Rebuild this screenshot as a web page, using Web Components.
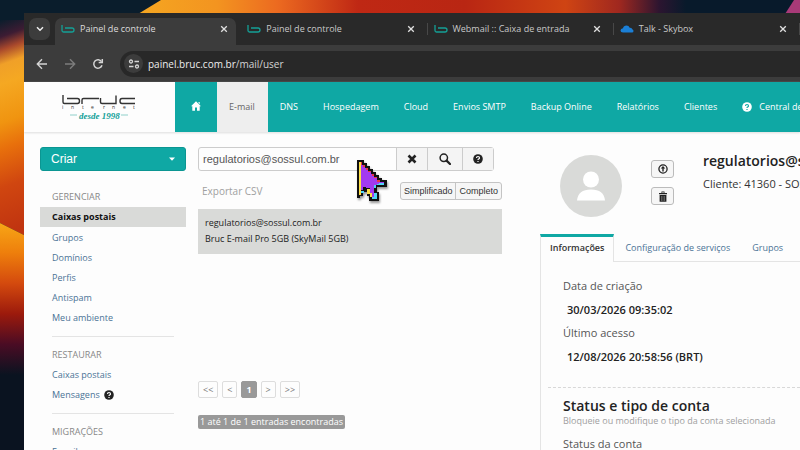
<!DOCTYPE html>
<html lang="pt-BR">
<head>
<meta charset="utf-8">
<title>Painel de controle</title>
<style>
html,body {
    margin:0;height:100%;
}
body {
    overflow:hidden;
    font:9px/14px "Open Sans","Noto Sans",sans-serif;
    color:#333;
    --theme:#0fa8a4;
    --link:#4a7396;
    --line:#e4e4e4;
    --muted:#a0a0a0;
}
</style>
</head>
<body>
<desk-top>
    <browser-window url="painel.bruc.com.br" path="/mail/user">
        <browser-tab slot="tabs" icon="bruc" active>Painel de controle</browser-tab>
        <browser-tab slot="tabs" icon="bruc">Painel de controle</browser-tab>
        <browser-tab slot="tabs" icon="bruc">Webmail :: Caixa de entrada</browser-tab>
        <browser-tab slot="tabs" icon="cloud">Talk - Skybox</browser-tab>
        <site-header></site-header>
        <mail-panel>
            <side-menu slot="menu"></side-menu>
            <mailbox-list slot="list"></mailbox-list>
            <account-detail slot="detail"></account-detail>
        </mail-panel>
    </browser-window>
    <mouse-pointer slot="pointer"></mouse-pointer>
</desk-top>
<script>
const icons = {
    bruc: '<svg width="14" height="10" viewBox="0 0 14 10" fill="none" stroke="#14a096" stroke-width="1.3"><path d="M1 1v5.500q0 1.500 1.500 1.500h8.500q2 0 2-2t-2-2H4"/></svg>',
    cloud: '<svg width="14" height="10" viewBox="0 0 14 10"><path fill="#1b7fd6" d="M3 8.500Q.500 8.500.500 6.500T3 4.300Q3.600 1.500 6.500 1.500q2.300 0 3.200 2.200Q12 3.500 12.300 5.300q1.200.4 1.200 1.700 0 1.500-1.500 1.500z"/></svg>',
    close: '<svg width="8" height="8" viewBox="0 0 8 8" stroke="currentColor" stroke-width="1.300"><path d="M1.200 1.200l5.600 5.600M6.800 1.200L1.200 6.800"/></svg>',
    chevron: '<svg width="8" height="6" viewBox="0 0 8 6" fill="none" stroke="currentColor" stroke-width="1.500"><path d="M1 1.200l3 3 3-3"/></svg>',
    back: '<svg width="12" height="12" viewBox="0 0 12 12" fill="none" stroke="currentColor" stroke-width="1.400"><path d="M11 6H1.500M6 1.300L1.300 6 6 10.700"/></svg>',
    forward: '<svg width="12" height="12" viewBox="0 0 12 12" fill="none" stroke="currentColor" stroke-width="1.400"><path d="M1 6h9.500M6 1.300L10.700 6 6 10.700"/></svg>',
    reload: '<svg width="12" height="12" viewBox="0 0 12 12" fill="none" stroke="currentColor" stroke-width="1.500"><path d="M10 7.200A4.200 4.200 0 1 1 9.500 3.600"/><path d="M10.300 1v3.600H6.700"/></svg>',
    tune: '<svg width="12" height="10" viewBox="0 0 12 10" fill="none" stroke="currentColor" stroke-width="1.300"><circle cx="3" cy="2.500" r="1.500"/><path d="M6.500 2.500h4.500M1 7.500h4.500"/><circle cx="9" cy="7.500" r="1.500"/></svg>',
    home: '<svg width="10" height="10" viewBox="0 0 10 10"><path fill="currentColor" d="M5 .300L10 5.200H8.700V9.700H6V6.500H4v3.200H1.300V5.200H0zM7.500 1h1.200v2.200L7.500 2z"/></svg>',
    help: '<svg width="10" height="10" viewBox="0 0 10 10"><circle cx="5" cy="5" r="4.800" fill="currentColor"/><path d="M3.500 4Q3.500 2.500 5 2.500T6.500 3.900Q6.500 4.600 5.600 5 5 5.300 5 6M5 6.900v1.100" fill="none" stroke="var(--hole,#fff)" stroke-width="1.200"/></svg>',
    remove: '<svg width="10" height="10" viewBox="0 0 10 10" stroke="currentColor" stroke-width="2.600"><path d="M1.500 1.500l7 7M8.500 1.500l-7 7"/></svg>',
    search: '<svg width="12" height="12" viewBox="0 0 12 12" fill="none" stroke="currentColor"><circle cx="4.800" cy="4.800" r="3.700" stroke-width="1.500"/><path d="M7.600 7.600l3.400 3.400" stroke-width="2.200" stroke-linecap="round"/></svg>',
    upload: '<svg width="10" height="10" viewBox="0 0 10 10"><circle cx="5" cy="5" r="4.100" fill="none" stroke="currentColor" stroke-width="1.300"/><path fill="currentColor" d="M5 2l2.300 2.600H5.700V7.600H4.300V4.600H2.700z"/></svg>',
    trash: '<svg width="10" height="11" viewBox="0 0 10 11"><path fill="currentColor" d="M1 2h2.500V.500h3V2H9v1.300H1zM4.300 1.200V2h1.400v-.8zM1.600 4h6.800v6.700H1.600z"/><path d="M3.500 5v5M5 5v5M6.500 5v5" stroke="#999" stroke-width=".5"/></svg>',
    caret: '<svg width="6" height="4" viewBox="0 0 6 4"><path fill="currentColor" d="M0 .500h6L3 3.700z"/></svg>'
};

const base = `
*,*::before {
    box-sizing:border-box;
}
svg {
    display:block;flex:none;
}
button,input {
    font:inherit;color:inherit;margin:0;padding:0;border:0;background:none;
}
a {
    color:inherit;text-decoration:none;
}
ul,h1,h2,h3,dl,dd,p {
    margin:0;padding:0;list-style:none;font-size:inherit;
}`;

class Part extends HTMLElement {
    constructor() {
        super();
        this.attachShadow({mode: 'open'});
    }
    connectedCallback() {
        this.shadowRoot.innerHTML = `<style>${base}${this.css()}</style>${this.html()}`;
    }
}

customElements.define('desk-top', class extends Part {
    css = () => `
    :host {
        display:block;position:relative;height:100%;overflow:hidden;
        padding:13px 0 0 24px;box-sizing:border-box;
        background:#0a1724;
    }
    .wall {
        position:absolute;inset:0;width:100%;height:100%;
    }`;
    html = () => `
    <svg class="wall" viewBox="0 0 800 450" preserveAspectRatio="none" aria-hidden="true">
        <defs>
            <linearGradient id="top" x1="130" x2="800" y1="0" y2="0" gradientUnits="userSpaceOnUse">
                <stop offset="0" stop-color="#f5a821"/><stop offset=".13" stop-color="#f39420"/>
                <stop offset=".22" stop-color="#ec6a20"/><stop offset=".34" stop-color="#bf2814"/>
                <stop offset=".5" stop-color="#b92613"/><stop offset=".65" stop-color="#cf4413"/>
                <stop offset=".73" stop-color="#a0281f"/><stop offset=".79" stop-color="#2c1530"/>
                <stop offset=".83" stop-color="#081a2b"/><stop offset="1" stop-color="#081a2b"/>
            </linearGradient>
            <linearGradient id="upper" x1="0" x2="70" y1="20" y2="210" gradientUnits="userSpaceOnUse">
                <stop offset="0" stop-color="#0a1d2c"/><stop offset=".08" stop-color="#3d1c33"/>
                <stop offset=".14" stop-color="#a8482c"/><stop offset=".21" stop-color="#f0a028"/>
                <stop offset=".3" stop-color="#f5a822"/><stop offset=".48" stop-color="#f09410"/>
                <stop offset=".6" stop-color="#e8700c"/><stop offset=".78" stop-color="#d04610"/>
                <stop offset="1" stop-color="#c03410"/>
            </linearGradient>
            <linearGradient id="lower" x1="0" x2="0" y1="222" y2="375" gradientUnits="userSpaceOnUse">
                <stop offset="0" stop-color="#f8a716"/><stop offset=".2" stop-color="#ee7f0c"/>
                <stop offset=".4" stop-color="#d44a0e"/><stop offset=".6" stop-color="#9c1a0c"/>
                <stop offset=".8" stop-color="#4a0c24"/><stop offset="1" stop-color="#0a1320"/>
            </linearGradient>
        </defs>
        <path fill="#0a1d2c" d="M0 0h800v450H0z"/>
        <path fill="url(#top)" d="M161 0h639v14H138z"/>
        <path fill="#a83a78" d="M794 0h6v14H785z"/>
        <path fill="url(#upper)" d="M0 20h26v216L0 223z"/>
        <path fill="url(#lower)" d="M0 223l26 13v214H0z"/>
    </svg>
    <slot></slot>
    <slot name="pointer"></slot>`;
});

customElements.define('browser-window', class extends Part {
    css = () => `
    :host {
        display:flex;flex-direction:column;position:relative;height:100%;overflow:hidden;
        background:#fdfdfd;
    }
    .tabs {
        display:flex;align-items:flex-end;height:32px;padding-left:5px;
        background:#292929;color:#c8c8c8;
    }
    .tabs button {
        display:grid;place-items:center;flex:none;
        width:21px;height:22px;margin:0 5px 5px 0;
        border-radius:7px;background:#3c3c3c;color:#eee;
    }
    .bar {
        display:flex;align-items:center;height:37px;padding-left:12px;
        background:#3c3c3c;color:#d4d4d4;
    }
    .bar > button {
        width:12px;margin-right:16px;
    }
    .bar > button[disabled] {
        color:#7c7c7c;
    }
    .address {
        display:flex;align-items:center;flex:1;height:26px;padding-left:4px;
        border-radius:13px 0 0 13px;background:#282828;
        font-size:10px;line-height:16px;
    }
    .address button {
        display:grid;place-items:center;
        width:19px;height:19px;margin-right:5px;
        border-radius:50%;background:#3c3c3c;
    }
    .address b {
        font-weight:400;color:#eee;
    }
    main {
        flex:1;display:flex;flex-direction:column;min-height:0;
    }`;
    html = () => `
    <div class="tabs">
        <button aria-label="Pesquisar guias">${icons.chevron}</button>
        <slot name="tabs"></slot>
    </div>
    <div class="bar">
        <button aria-label="Voltar">${icons.back}</button>
        <button aria-label="Avançar" disabled>${icons.forward}</button>
        <button aria-label="Recarregar">${icons.reload}</button>
        <div class="address">
            <button aria-label="Informações do site">${icons.tune}</button>
            <span><b>${this.getAttribute('url')}</b>${this.getAttribute('path')}</span>
        </div>
    </div>
    <main><slot></slot></main>`;
});

customElements.define('browser-tab', class extends Part {
    css = () => `
    :host {
        display:flex;align-items:center;gap:5px;flex:1 0 186px;
        height:12px;margin-bottom:10px;padding:0 12px 0 6px;box-sizing:border-box;
        border-right:1px solid #484848;
    }
    :host([active]) {
        position:relative;z-index:0;height:27px;margin-bottom:0;padding-bottom:5px;
        border-color:transparent;color:#dcdcdc;
    }
    :host([active])::before {
        content:"";position:absolute;z-index:-1;inset:0 4px 0 0;
        border-radius:7px 7px 0 0;background:#3c3c3c;
    }
    span {
        flex:1;white-space:nowrap;
    }
    button {
        color:#e0e0e0;
    }`;
    html = () => `${icons[this.getAttribute('icon')]}<span><slot></slot></span><button aria-label="Fechar">${icons.close}</button>`;
});

customElements.define('site-header', class extends Part {
    items = ['DNS', 'Hospedagem', 'Cloud', 'Envios SMTP', 'Backup Online', 'Relatórios', 'Clientes'];
    css = () => `
    :host {
        display:flex;flex:none;height:50px;
        box-shadow:0 1px 2px #ddd;
    }
    .logo {
        flex:none;width:151px;padding:12px 0 0 38px;
    }
    nav {
        display:flex;flex:1;min-width:0;overflow:hidden;
        background:var(--theme);color:#fff;--hole:var(--theme);
    }
    nav a {
        display:flex;align-items:center;gap:7px;flex:none;
        padding:0 13px 1px 12px;white-space:nowrap;
    }
    nav .home {
        padding:0 16px 2px;
    }
    nav .on {
        background:#eee;color:#666;
    }`;
    html = () => `
    <a class="logo" href="#" aria-label="bruc internet desde 1998">
        <svg width="76" height="28" viewBox="0 0 76 28" fill="none">
            <g stroke="#333" stroke-width="1.400">
                <path d="M1 1v7q0 1.500 1.500 1.500h13q2 0 2-2.500t-2-2.500H5"/>
                <path d="M20 10V6q0-1.500 1.500-1.500H37"/>
                <path d="M38.500 4v4q0 1.500 1.500 1.500h14V1.500"/>
                <path d="M73 4.500H60q-2 0-2 2.500t2 2.500h13"/>
            </g>
            <text x="0 9 20 29 41 50 61 71" y="15" font-family="Open Sans,sans-serif" font-size="5" fill="#333">internet</text>
            <path d="M8 21h7M59 21h7" stroke="#8fd0ca"/>
            <text x="17" y="25" fill="#109f98" font-family="Liberation Serif,serif" font-size="9" font-style="italic" font-weight="700">desde 1998</text>
        </svg>
    </a>
    <nav>
        <a class="home" href="#" aria-label="Início">${icons.home}</a>
        <a class="on" href="#">E-mail</a>
        ${this.items.map(item => `<a href="#">${item}</a>`).join('')}
        <a href="#">${icons.help}Central de ajuda</a>
    </nav>`;
});

customElements.define('mail-panel', class extends Part {
    css = () => `
    :host {
        display:grid;flex:1;min-height:0;
        grid-template-columns:minmax(146px,146fr) minmax(316px,316fr) minmax(0,298fr);
        padding:15px 0 0 16px;overflow:hidden;
    }
    div {
        min-width:0;
    }
    .list {
        margin-left:12px;
    }
    .detail {
        margin-left:38px;
    }`;
    html = () => `
    <div><slot name="menu"></slot></div>
    <div class="list"><slot name="list"></slot></div>
    <div class="detail"><slot name="detail"></slot></div>`;
});

customElements.define('side-menu', class extends Part {
    css = () => `
    :host {
        display:block;
    }
    button {
        display:flex;align-items:center;justify-content:space-between;
        width:100%;height:24px;padding:0 10px;
        border:1px solid #0b9692;border-radius:3px;
        background:var(--theme);color:#fff;
        font:12px "Liberation Sans",Arial,sans-serif;
    }
    h2 {
        padding:0 12px;color:#888;font-weight:400;line-height:20px;
    }
    button + h2 {
        margin-top:16px;
    }
    li {
        padding:0 12px;color:var(--link);line-height:20px;
    }
    li a {
        display:inline-flex;align-items:center;gap:4px;
    }
    .on {
        margin-bottom:1px;
        background:#d9dad8;color:#111;font-weight:700;
    }
    li svg {
        color:#222;
    }
    hr {
        margin:8px 12px;border:0;border-top:1px solid var(--line);
    }`;
    html = () => `
    <button>Criar ${icons.caret}</button>
    <h2>GERENCIAR</h2>
    <ul>
        <li class="on"><a href="#">Caixas postais</a>
        ${['Grupos', 'Domínios', 'Perfis', 'Antispam', 'Meu ambiente'].map(item => `<li><a href="#">${item}</a>`).join('')}
    </ul>
    <hr>
    <h2>RESTAURAR</h2>
    <ul>
        <li><a href="#">Caixas postais</a>
        <li><a href="#">Mensagens ${icons.help}</a>
    </ul>
    <hr>
    <h2>MIGRAÇÕES</h2>
    <ul>
        <li><a href="#">E-mail</a>
    </ul>`;
});

customElements.define('mailbox-list', class extends Part {
    css = () => `
    :host {
        display:block;
    }
    form {
        display:flex;height:24px;margin-right:8px;
        border:1px solid #ccc;border-radius:3px;
        font-family:"Liberation Sans",Arial,sans-serif;
    }
    input {
        flex:1;min-width:0;padding:0 4px;font-size:11px;color:#555;outline:0;
    }
    form button {
        display:grid;place-items:center;width:31px;
        border-left:1px solid #ccc;background:#f4f4f4;color:#222;
    }
    form button:nth-of-type(2) {
        width:35px;
    }
    .tools {
        display:flex;justify-content:space-between;align-items:center;
        margin:11px 0 9px;padding-left:4px;color:var(--muted);font-size:10px;
    }
    .view {
        display:flex;height:18px;
        border:1px solid #c4c4c4;border-radius:3px;background:#f6f6f6;
        font:9px "Liberation Sans",Arial,sans-serif;color:#333;
    }
    .view button {
        padding:0 3px;
    }
    .view button + button {
        border-left:1px solid #c4c4c4;
    }
    .row {
        display:block;padding:6px 7px 7px;background:#d9dad8;color:#222;line-height:16px;
    }
    .pages {
        display:flex;gap:4px;margin-top:127px;color:#777;
    }
    .pages button {
        height:17px;padding:0 4px;
        border:1px solid #ddd;border-radius:2px;
    }
    .pages .on {
        border-color:#999;background:#999;color:#fff;font-weight:700;
    }
    .count {
        display:inline-block;margin-top:17px;padding:0 2px;
        border-radius:2px;background:#999;color:#fff;
    }`;
    html = () => `
    <form>
        <input value="regulatorios@sossul.com.br" aria-label="Pesquisar">
        <button type="button" aria-label="Limpar">${icons.remove}</button>
        <button type="button" aria-label="Buscar">${icons.search}</button>
        <button type="button" aria-label="Ajuda">${icons.help}</button>
    </form>
    <div class="tools">
        <a href="#">Exportar CSV</a>
        <div class="view"><button>Simplificado</button><button>Completo</button></div>
    </div>
    <a class="row" href="#">regulatorios@sossul.com.br<br>Bruc E-mail Pro 5GB (SkyMail 5GB)</a>
    <div class="pages">
        <button>&lt;&lt;</button><button>&lt;</button><button class="on">1</button><button>&gt;</button><button>&gt;&gt;</button>
    </div>
    <p class="count">1 até 1 de 1 entradas encontradas</p>`;
});

customElements.define('account-detail', class extends Part {
    css = () => `
    :host {
        display:block;font-size:11px;line-height:16px;white-space:nowrap;
    }
    header {
        display:flex;padding:8px 0 17px 20px;
    }
    .actions {
        display:flex;flex-direction:column;gap:9px;margin:5px 29px 0;
    }
    .actions button {
        display:grid;place-items:center;width:23px;height:18px;
        border:1px solid #bbb;border-radius:3px;background:#f6f6f6;color:#222;
    }
    h1 {
        margin:-4px 0 5px;font-size:14px;line-height:20px;font-weight:600;color:#222;
    }
    nav {
        display:flex;font-size:9px;color:var(--link);
    }
    nav a {
        padding:6px 11px 5px;
        border-bottom:1px solid var(--line);
    }
    nav .on {
        padding:3px 9px 6px;
        border:solid var(--line);border-width:3px 1px 0;border-top-color:var(--theme);
        color:#333;font-weight:600;
    }
    nav::after {
        content:"";flex:1;border-bottom:1px solid var(--line);
    }
    section {
        padding:12px 0 40px 22px;border-left:1px solid var(--line);
    }
    dt {
        line-height:24px;color:#555;
    }
    dd {
        padding-left:4px;line-height:23px;font-weight:600;color:#222;
    }
    hr {
        margin:19px 0 8px -15px;border:0;border-top:1px dashed #d8d8d8;
    }
    h2 {
        font-size:14px;line-height:20px;font-weight:600;color:#222;
    }
    small {
        display:block;font-size:9px;line-height:10px;color:var(--muted);
    }
    p {
        margin-top:10px;color:#555;
    }`;
    html = () => `
    <header>
        <svg width="62" height="62" viewBox="0 0 62 62"><circle cx="31" cy="31" r="31" fill="#d9dad8"/><circle cx="31" cy="24.500" r="8" fill="#fff"/><path d="M17 45.500Q18 34.500 31 34.500T45 45.500z" fill="#fff"/></svg>
        <div class="actions">
            <button aria-label="Enviar">${icons.upload}</button>
            <button aria-label="Excluir">${icons.trash}</button>
        </div>
        <div>
            <h1>regulatorios@sossul.com.br</h1>
            <div>Cliente: 41360 - SOSSUL</div>
        </div>
    </header>
    <nav><a class="on" href="#">Informações</a><a href="#">Configuração de serviços</a><a href="#">Grupos</a></nav>
    <section>
        <dl>
            <dt>Data de criação<dd>30/03/2026 09:35:02
            <dt>Último acesso<dd>12/08/2026 20:58:56 (BRT)
        </dl>
        <hr>
        <h2>Status e tipo de conta</h2>
        <small>Bloqueie ou modifique o tipo da conta selecionada</small>
        <p>Status da conta</p>
    </section>`;
});

customElements.define('mouse-pointer', class extends Part {
    css = () => `
    :host {
        display:block;position:absolute;left:357px;top:160px;pointer-events:none;
    }
    svg {
        overflow:visible;filter:drop-shadow(1px 2px 1px #0006);
    }`;
    html = () => `
    <svg width="30" height="42" viewBox="0 0 30 42" shape-rendering="crispEdges">
        <path fill="#111" d="M0 0h7v3h3v3h3v3h3v3h3v3h3v3h3v2h5v7H20v5h2v9H12v-5h-2v-4H6v4H3v2H0z"/>
        <path fill="#a33af0" d="M2 2h3v3h3v3h3v3h3v3h3v3h3v3h3v2h4v3H18v3H9v-1H6v3H2z"/>
        <path fill="#fde047" d="M2 2h2v33H2zM10 29h3v4h2v4h-2v-3h-3z"/>
        <path fill="#e8344a" d="M4 2h1v3h3v2H6V5H4zM9 8h2v3h3v1h-3v-2H9zM15 14h2v3h3v1h-3v-2h-2zM20 20h3v2h-3z"/>
        <path fill="#a33af0" d="M13 28h4v6h2v3h-4v-4h-2z"/>
        <path fill="#4fd5f7" d="M22 23h5v2h-7v-1h2zM4 31h3v2H4zM17 25h2v3h-2zM17 33h3v6h-5v-2h2z"/>
    </svg>`;
});
</script>
</body>
</html>
